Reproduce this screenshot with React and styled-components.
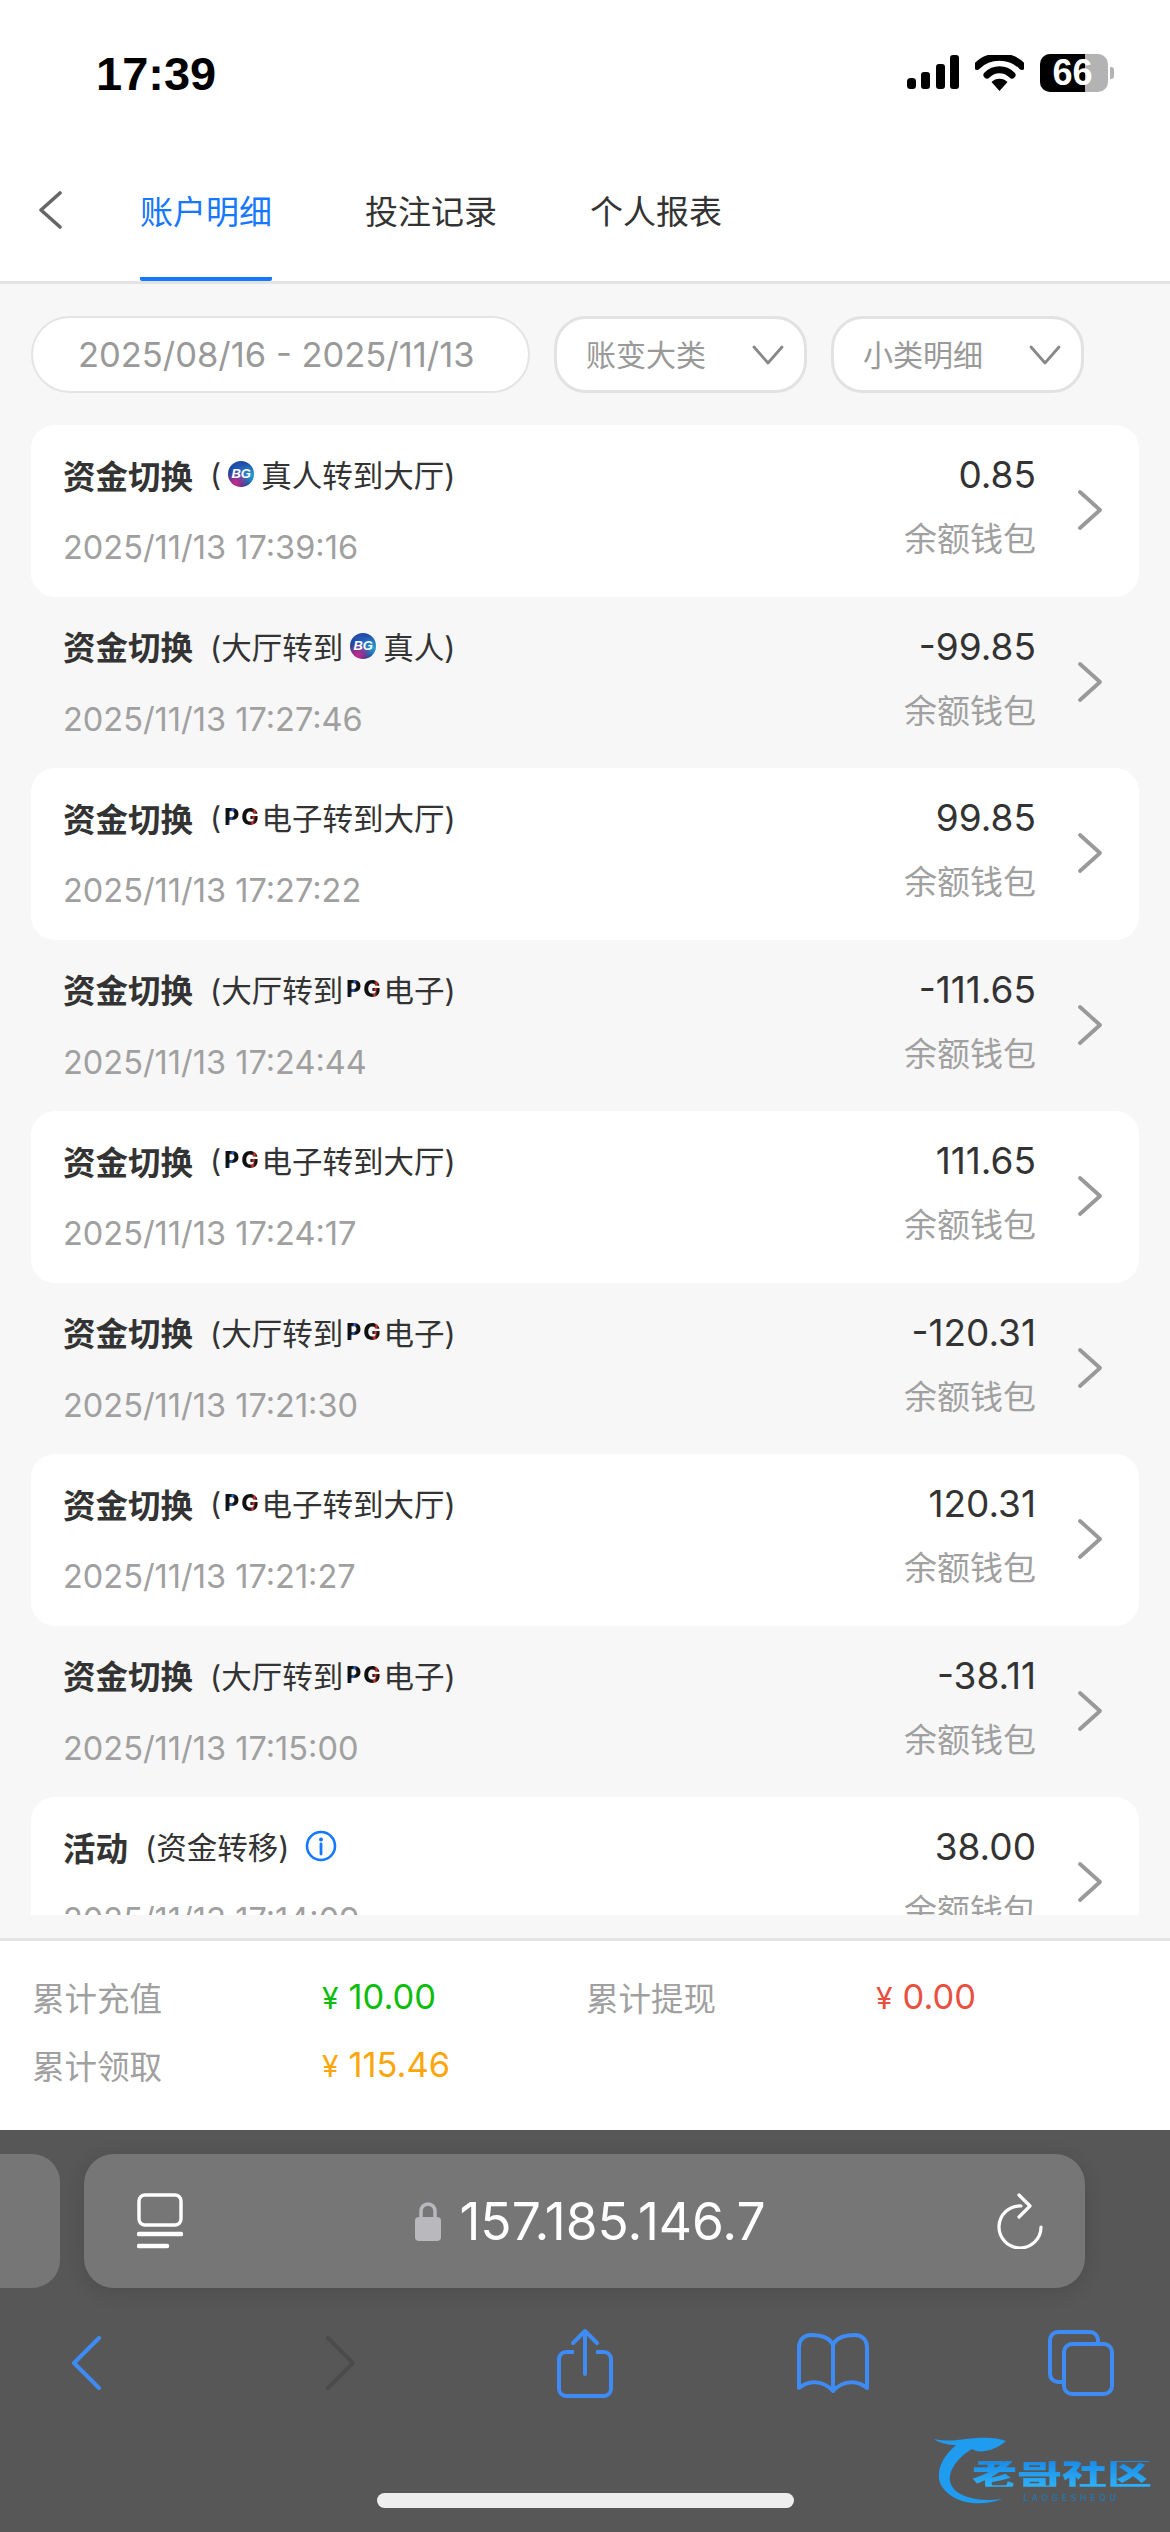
import styled, { createGlobalStyle } from "styled-components";

const sans = `Inter, "Noto Sans CJK SC", sans-serif`;

const GlobalStyle = createGlobalStyle`
  html, body {
    margin: 0;
    padding: 0;
    background: #f7f7f7;
  }
  * {
    box-sizing: border-box;
  }
`;

const records = [
  { title: "资金切换", kind: "bgOut", date: "2025/11/13 17:39:16", amount: "0.85" },
  { title: "资金切换", kind: "bgIn", date: "2025/11/13 17:27:46", amount: "-99.85" },
  { title: "资金切换", kind: "pgOut", date: "2025/11/13 17:27:22", amount: "99.85" },
  { title: "资金切换", kind: "pgIn", date: "2025/11/13 17:24:44", amount: "-111.65" },
  { title: "资金切换", kind: "pgOut", date: "2025/11/13 17:24:17", amount: "111.65" },
  { title: "资金切换", kind: "pgIn", date: "2025/11/13 17:21:30", amount: "-120.31" },
  { title: "资金切换", kind: "pgOut", date: "2025/11/13 17:21:27", amount: "120.31" },
  { title: "资金切换", kind: "pgIn", date: "2025/11/13 17:15:00", amount: "-38.11" },
  { title: "活动", kind: "activity", date: "2025/11/13 17:14:09", amount: "38.00" },
];

function Detail({ kind }) {
  if (kind === "bgOut") {
    return (
      <DetailText>
        (<BgLogo>BG</BgLogo>真人转到大厅)
      </DetailText>
    );
  }
  if (kind === "bgIn") {
    return (
      <DetailText>
        (大厅转到<BgLogo>BG</BgLogo>真人)
      </DetailText>
    );
  }
  if (kind === "pgOut") {
    return (
      <DetailText>
        (<PgLogo>PG</PgLogo>电子转到大厅)
      </DetailText>
    );
  }
  if (kind === "pgIn") {
    return (
      <DetailText>
        (大厅转到<PgLogo>PG</PgLogo>电子)
      </DetailText>
    );
  }
  return (
    <DetailText>
      (资金转移)
      <InfoIcon viewBox="0 0 32 32">
        <circle cx="16" cy="16" r="14" fill="none" stroke="#1677ff" strokeWidth="2.6" />
        <circle cx="16" cy="9.5" r="2" fill="#1677ff" />
        <path d="M16 14v10" stroke="#1677ff" strokeWidth="2.8" strokeLinecap="round" />
      </InfoIcon>
    </DetailText>
  );
}

function Chevron() {
  return (
    <FilterChevron viewBox="0 0 32 20">
      <path d="M2 2l14 16L30 2" fill="none" stroke="#888" strokeWidth="2.8" strokeLinecap="round" strokeLinejoin="round" />
    </FilterChevron>
  );
}

export default function App() {
  return (
    <Page>
      <GlobalStyle />
      <StatusBar>
        <Clock>17:39</Clock>
        <StatusIcons>
          <svg width="52" height="34" viewBox="0 0 52 34">
            <rect x="0" y="23" width="9" height="11" rx="3.5" />
            <rect x="14" y="17" width="9" height="17" rx="3" />
            <rect x="29" y="9" width="9" height="25" rx="3" />
            <rect x="43" y="0" width="9" height="34" rx="3" />
          </svg>
          <svg width="49" height="36" viewBox="0 0 49 36">
            <path d="M2 11C14-1 35-1 47 11" fill="none" stroke="#000" strokeWidth="7.5" strokeLinecap="round" />
            <path d="M12 20c7-7 18-7 25 0" fill="none" stroke="#000" strokeWidth="7" strokeLinecap="round" />
            <path d="M16.5 27c4-4.500 12-4.500 16 0L24.500 36z" />
          </svg>
          <Battery>
            <BatteryFill style={{ width: "66%" }} />
            <BatteryLabel>66</BatteryLabel>
          </Battery>
          <BatteryTip />
        </StatusIcons>
      </StatusBar>

      <NavBar>
        <BackIcon viewBox="0 0 24 38">
          <path d="M22 2L3 19l19 17" fill="none" stroke="#666" strokeWidth="3.6" strokeLinecap="round" strokeLinejoin="round" />
        </BackIcon>
        <Tabs>
          <Tab $active>账户明细</Tab>
          <Tab>投注记录</Tab>
          <Tab>个人报表</Tab>
        </Tabs>
      </NavBar>

      <Filters>
        <DatePill>2025/08/16 - 2025/11/13</DatePill>
        <SelectPill>
          账变大类
          <Chevron />
        </SelectPill>
        <SelectPill>
          小类明细
          <Chevron />
        </SelectPill>
      </Filters>

      <List>
        {records.map((item, index) => (
          <Row key={item.date} $striped={index % 2 === 0}>
            <RowLeft>
              <RowTitle>
                <TitleText>{item.title}</TitleText>
                <Detail kind={item.kind} />
              </RowTitle>
              <DateText>{item.date}</DateText>
            </RowLeft>
            <RowRight>
              <Amount>{item.amount}</Amount>
              <Wallet>余额钱包</Wallet>
            </RowRight>
            <RowArrow viewBox="0 0 26 42">
              <path d="M3 3l20 18L3 39" fill="none" stroke="#999" strokeWidth="3.8" strokeLinecap="round" strokeLinejoin="round" />
            </RowArrow>
          </Row>
        ))}
      </List>

      <Summary>
        <SummaryLabel>累计充值</SummaryLabel>
        <SummaryValue $color="#0cbd0c"><Yen>¥</Yen>10.00</SummaryValue>
        <SummaryLabel>累计提现</SummaryLabel>
        <SummaryValue $color="#e9503f"><Yen>¥</Yen>0.00</SummaryValue>
        <SummaryLabel>累计领取</SummaryLabel>
        <SummaryValue $color="#fca60b"><Yen>¥</Yen>115.46</SummaryValue>
      </Summary>

      <Browser>
        <UrlRow>
          <SideTab />
          <UrlBar>
            <svg width="46" height="56" viewBox="0 0 46 56">
              <rect x="2" y="2" width="42" height="30" rx="6" fill="none" stroke="#fff" strokeWidth="3.4" />
              <path d="M2 41h42" stroke="#fff" strokeWidth="4.500" strokeLinecap="round" />
              <path d="M2 53h28" stroke="#fff" strokeWidth="4.500" strokeLinecap="round" />
            </svg>
            <UrlText>
              <svg width="28" height="40" viewBox="0 0 28 40">
                <path d="M7 18v-8a7 7 0 0114 0v8" fill="none" stroke="#b9b9bd" strokeWidth="3.5" />
                <rect x="1" y="16" width="26" height="24" rx="4" fill="#b9b9bd" />
              </svg>
              157.185.146.7
            </UrlText>
            <svg width="46" height="56" viewBox="0 0 46 56">
              <path d="M24 13A21 21 0 1 0 44 34" fill="none" stroke="#fff" strokeWidth="3.2" strokeLinecap="round" />
              <path d="M22 2l11 11-11 11" fill="none" stroke="#fff" strokeWidth="3.2" strokeLinecap="round" strokeLinejoin="round" />
            </svg>
          </UrlBar>
        </UrlRow>

        <Toolbar>
          <ToolIcon $gap={0} width="30" height="54" viewBox="0 0 30 54">
            <path d="M28 2L3 27l25 25" fill="none" stroke="#3e8bf5" strokeWidth="4" strokeLinecap="round" strokeLinejoin="round" />
          </ToolIcon>
          <ToolIcon $gap={225} width="30" height="54" viewBox="0 0 30 54">
            <path d="M2 2l25 25L2 52" fill="none" stroke="#4b4b4b" strokeWidth="4" strokeLinecap="round" strokeLinejoin="round" />
          </ToolIcon>
          <ToolIcon $gap={201} width="56" height="70" viewBox="0 0 56 70">
            <path d="M17 24H9a7 7 0 00-7 7v30a7 7 0 007 7h38a7 7 0 007-7V31a7 7 0 00-7-7h-8" fill="none" stroke="#3e8bf5" strokeWidth="4" />
            <path d="M28 46V3M16 15L28 3l12 12" fill="none" stroke="#3e8bf5" strokeWidth="4" strokeLinecap="round" strokeLinejoin="round" />
          </ToolIcon>
          <ToolIcon $gap={184} width="72" height="60" viewBox="0 0 72 60">
            <path d="M36 12C32 3 22 2 14 2 7 2 2 7 2 14v41c10-8 24-8 34 3 10-11 24-11 34-3V14c0-7-5-12-12-12-8 0-18 1-22 10zM36 12v44" fill="none" stroke="#3e8bf5" strokeWidth="4" strokeLinejoin="round" />
          </ToolIcon>
          <ToolIcon $gap={178} width="68" height="68" viewBox="0 0 68 68">
            <path d="M51 14v-3a8 8 0 00-8-8H11a8 8 0 00-8 8v34a8 8 0 008 8h4" fill="none" stroke="#3e8bf5" strokeWidth="4" />
            <rect x="17" y="15" width="48" height="50" rx="8" fill="none" stroke="#3e8bf5" strokeWidth="4" />
          </ToolIcon>
        </Toolbar>

        <Watermark>
          <svg width="110" height="74" viewBox="0 0 110 74">
            <path d="M2 6c14 3 22 1 32 0 16-2 30-2 40 2-8 8-26 14-34 8-14 8-24 22-22 32 2 12 20 22 52 18-26 10-54 2-62-16-4-12 2-26 16-38C16 12 8 10 2 6z" fill="#1f9bf0" />
          </svg>
          <WatermarkName>老哥社区</WatermarkName>
          <WatermarkSub>LAOGESHEQU</WatermarkSub>
        </Watermark>

        <HomeBar />
      </Browser>
    </Page>
  );
}

const Page = styled.div`
  width: 1170px;
  height: 2532px;
  display: flex;
  flex-direction: column;
  overflow: hidden;
  background: #f7f7f7;
  font-family: ${sans};
`;

const StatusBar = styled.div`
  height: 140px;
  background: #fff;
  display: flex;
  justify-content: space-between;
  padding: 50px 56px 0 96px;
`;

const Clock = styled.div`
  font-family: "Liberation Sans", sans-serif;
  font-size: 47px;
  font-weight: 700;
  line-height: 48px;
  color: #000;
`;

const StatusIcons = styled.div`
  display: flex;
  align-items: flex-start;
  gap: 16px;
  padding-top: 5px;
`;

const Battery = styled.div`
  position: relative;
  width: 68px;
  height: 38px;
  margin-top: -1px;
  border-radius: 10px;
  background: #b3b3b3;
  overflow: hidden;
`;

const BatteryFill = styled.div`
  height: 100%;
  background: #000;
`;

const BatteryLabel = styled.span`
  position: absolute;
  top: 0;
  left: 0;
  width: 100%;
  padding-right: 3px;
  text-align: center;
  font-family: "Liberation Sans", sans-serif;
  font-size: 36px;
  font-weight: 700;
  line-height: 38px;
  color: #fff;
`;

const BatteryTip = styled.div`
  width: 4px;
  height: 12px;
  margin: 12px 0 0 -14px;
  border-radius: 0 3px 3px 0;
  background: #b3b3b3;
`;

const NavBar = styled.div`
  height: 144px;
  background: #fff;
  border-bottom: 3px solid #e3e3e3;
  display: flex;
  align-items: stretch;
  padding-left: 38px;
`;

const BackIcon = styled.svg`
  width: 24px;
  height: 38px;
  margin-top: 51px;
`;

const Tabs = styled.div`
  display: flex;
  gap: 93px;
  margin-left: 78px;
`;

const Tab = styled.div`
  height: 141px;
  padding-top: 49px;
  font-size: 33px;
  line-height: 46px;
  color: ${(p) => (p.$active ? "#1677ff" : "#333")};
  border-bottom: 4px solid ${(p) => (p.$active ? "#1677ff" : "transparent")};
  border-radius: 0 0 2px 2px;
`;

const Filters = styled.div`
  height: 141px;
  display: flex;
  gap: 24px;
  padding: 32px 0 0 31px;
`;

const DatePill = styled.div`
  width: 499px;
  height: 77px;
  padding-left: 45px;
  border: 2px solid #e4e4e4;
  border-radius: 39px;
  background: #fff;
  font-size: 34.500px;
  line-height: 73px;
  white-space: nowrap;
  color: #999;
`;

const SelectPill = styled.div`
  width: 253px;
  height: 77px;
  padding: 0 20px 4px 29px;
  border: 3px solid #e2e2e2;
  border-radius: 32px;
  background: #fff;
  display: flex;
  align-items: center;
  justify-content: space-between;
  font-size: 30px;
  color: #999;
`;

const FilterChevron = styled.svg`
  width: 32px;
  height: 20px;
  margin-top: 4px;
`;

const List = styled.div`
  height: 1490px;
  margin: 0 31px;
  overflow: hidden;
  flex-shrink: 0;
`;

const Row = styled.div`
  height: 171.500px;
  padding: 24px 36px 0 32px;
  border-radius: 24px;
  background: ${(p) => (p.$striped ? "#fff" : "transparent")};
  display: flex;
  align-items: flex-start;
`;

const RowLeft = styled.div`
  flex: 1;
  min-width: 0;
`;

const RowTitle = styled.div`
  display: flex;
  align-items: center;
  height: 50px;
`;

const TitleText = styled.span`
  font-size: 32.500px;
  font-weight: 700;
  color: #333;
`;

const DetailText = styled.span`
  display: inline-flex;
  align-items: center;
  margin-left: 17px;
  font-size: 30.500px;
  color: #333;
`;

const BgLogo = styled.span`
  display: inline-block;
  flex-shrink: 0;
  width: 26px;
  height: 26px;
  margin: 0 7px;
  border-radius: 50%;
  background:
    radial-gradient(circle at 30% 85%, #d02a8c 0%, rgba(208, 42, 140, 0) 45%),
    radial-gradient(circle at 90% 55%, #26a3d6 0%, rgba(38, 163, 214, 0) 50%),
    radial-gradient(circle at 45% 35%, #2a5fc4 0%, #173a8c 70%);
  font-family: "Liberation Sans", sans-serif;
  font-size: 13px;
  font-style: italic;
  font-weight: 700;
  line-height: 26px;
  text-align: center;
  color: #fff;
`;

const PgLogo = styled.span`
  display: inline-block;
  flex-shrink: 0;
  margin: 0 1px 0 3px;
  font-family: Inter, sans-serif;
  font-size: 23px;
  font-weight: 800;
  letter-spacing: 2px;
  background: linear-gradient(100deg, #111 0 18%, #2b6fe0 24%, #111 30% 42%, #e8782a 47%, #111 52% 72%, #d9352f 78%, #111 84% 92%, #e8782a 100%);
  -webkit-background-clip: text;
  background-clip: text;
  color: transparent;
`;

const InfoIcon = styled.svg`
  width: 32px;
  height: 32px;
  margin-left: 16px;
`;

const DateText = styled.div`
  margin-top: 27px;
  font-size: 32.500px;
  line-height: 44px;
  color: #a0a0a0;
`;

const RowRight = styled.div`
  text-align: right;
  margin-right: 41px;
`;

const Amount = styled.div`
  height: 50px;
  margin-top: 1px;
  font-size: 37px;
  line-height: 50px;
  color: #333;
`;

const Wallet = styled.div`
  margin-top: 17px;
  font-size: 33px;
  line-height: 44px;
  color: #a0a0a0;
`;

const RowArrow = styled.svg`
  width: 26px;
  height: 42px;
  margin-top: 40px;
`;

const Summary = styled.div`
  margin-top: 23px;
  height: 192px;
  flex-shrink: 0;
  background: #fff;
  border-top: 3px solid #e3e3e3;
  display: grid;
  grid-template-columns: 290px 264px 290px 1fr;
  grid-auto-rows: 68px;
  align-items: center;
  padding: 21px 0 0 32px;
`;

const SummaryLabel = styled.div`
  font-size: 32.500px;
  color: #a0a0a0;
`;

const SummaryValue = styled.div`
  font-size: 34.500px;
  color: ${(p) => p.$color};
`;

const Yen = styled.span`
  margin-right: 10px;
  font-size: 30px;
`;

const Browser = styled.div`
  position: relative;
  flex: 1;
  background: #575757;
  padding-top: 24px;
`;

const UrlRow = styled.div`
  display: flex;
  gap: 24px;
`;

const SideTab = styled.div`
  width: 60px;
  height: 134px;
  border-radius: 0 28px 28px 0;
  background: #767676;
`;

const UrlBar = styled.div`
  width: 1001px;
  height: 134px;
  padding: 0 42px 0 53px;
  border-radius: 30px;
  background: #767676;
  box-shadow: 0 4px 20px rgba(0, 0, 0, 0.12);
  display: flex;
  align-items: center;
  justify-content: space-between;
`;

const UrlText = styled.div`
  display: flex;
  align-items: center;
  gap: 17px;
  font-size: 51.500px;
  color: #fff;
`;

const Toolbar = styled.div`
  display: flex;
  align-items: center;
  height: 70px;
  margin-top: 40px;
  padding-left: 71px;
`;

const ToolIcon = styled.svg`
  flex-shrink: 0;
  margin-left: ${(p) => p.$gap}px;
`;

const Watermark = styled.div`
  position: absolute;
  left: 932px;
  top: 303px;
  width: 221px;
  height: 74px;
  filter: blur(0.6px);

  svg {
    position: absolute;
    left: 0;
    top: 0;
  }
`;

const WatermarkName = styled.div`
  position: absolute;
  left: 40px;
  top: 25px;
  height: 32px;
  font-size: 45px;
  font-weight: 900;
  line-height: 32px;
  white-space: nowrap;
  transform: scaleY(0.8);
  background: linear-gradient(#1a8be8, #2fb2f5);
  -webkit-background-clip: text;
  background-clip: text;
  color: transparent;
`;

const WatermarkSub = styled.div`
  position: absolute;
  left: 91px;
  top: 60px;
  font-size: 9px;
  line-height: 10px;
  letter-spacing: 3.500px;
  color: #1a7fc8;
`;

const HomeBar = styled.div`
  position: absolute;
  left: 377px;
  top: 363px;
  width: 417px;
  height: 15px;
  border-radius: 8px;
  background: #eee;
`;
